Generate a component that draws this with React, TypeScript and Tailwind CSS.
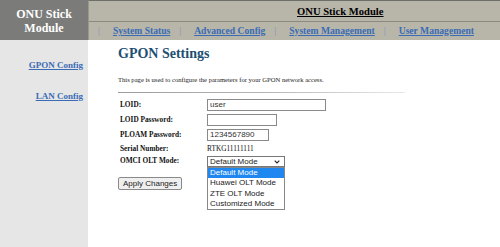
const serif = "font-['Liberation_Serif','Times_New_Roman',serif]";
const sans = "font-['Liberation_Sans',Arial,sans-serif]";

const navItems = ["System Status", "Advanced Config", "System Management", "User Management"];

const modes = ["Default Mode", "Huawei OLT Mode", "ZTE OLT Mode", "Customized Mode"];

export default function App() {
  return (
    <div className={`grid h-[247px] w-[500px] grid-cols-[88px_1fr] grid-rows-[40px_1fr] overflow-hidden bg-white ${serif}`}>
      {/* corner */}
      <div className="flex flex-col items-center justify-center bg-[#7b7b79] pt-[1px] text-[12px] font-bold leading-[14px] text-white">
        <span>ONU Stick</span>
        <span>Module</span>
      </div>

      {/* top bar */}
      <div className="flex flex-col border-t border-l border-t-[#6e6e68] border-l-[#9a978c] bg-[#b8b5a9]">
        <div className="flex h-[21px] items-center border-b border-[#8c8a80] pl-[208px] pt-[1px]">
          <span className="text-[10.6px] font-bold text-black underline">ONU Stick Module</span>
        </div>
        <div className="flex flex-1 items-center text-[9.6px] font-bold">
          {navItems.map(item => (
            <div key={item} className="flex items-center">
              <span className="ml-[9px] mr-[13px] font-normal text-[#7f93c0]">|</span>
              <a className="text-[#3a6cb5] underline">{item}</a>
            </div>
          ))}
        </div>
      </div>

      {/* sidebar */}
      <div className="flex flex-col items-end gap-[17px] bg-[#e6e6e6] pt-[19px] pr-[5px] text-[9px] font-bold">
        <a className="text-[#3a6cb5] underline">GPON Config</a>
        <a className="text-[#3a6cb5] underline">LAN Config</a>
      </div>

      {/* content */}
      <div className="pl-[30px] pt-[5px]">
        <h1 className="text-[14px] font-bold leading-[18px] text-[#1d4f72]">GPON Settings</h1>
        <p className="mt-[13px] text-[6.6px] leading-[8px] text-[#222]">
          This page is used to configure the parameters for your GPON network access.
        </p>
        <div className="mt-[8px] h-px w-[287px] bg-gradient-to-r from-[#9c9c9c] via-[#b4b4b4] to-[#e8e8e8]" />

        <div className="mt-[6px] grid grid-cols-[89px_1fr] items-center gap-y-[3px] text-[7.3px] text-[#111]">
          <span className="pl-[2px] font-bold">LOID:</span>
          <input
            readOnly
            value="user"
            className={`h-[12px] w-[119px] border border-[#8a8a8a] px-[2px] text-[8px] text-[#333] outline-none ${sans}`}
          />
          <span className="pl-[2px] font-bold">LOID Password:</span>
          <input
            readOnly
            value=""
            className={`h-[12px] w-[70px] border border-[#8a8a8a] px-[2px] text-[8px] outline-none ${sans}`}
          />
          <span className="pl-[2px] font-bold">PLOAM Password:</span>
          <input
            readOnly
            value="1234567890"
            className={`h-[12px] w-[62px] border border-[#8a8a8a] px-[2px] text-[8px] text-[#333] outline-none ${sans}`}
          />
          <span className="h-[9px] pl-[2px] font-bold leading-[9px]">Serial Number:</span>
          <span className="h-[9px] leading-[9px]">RTKG11111111</span>
          <span className="pl-[2px] font-bold">OMCI OLT Mode:</span>
          <div className="relative">
            <div className={`flex h-[11px] w-[78px] items-center justify-between border border-[#777] px-[2px] text-[8px] text-[#222] ${sans}`}>
              <span>Default Mode</span>
              <svg width="6" height="4" viewBox="0 0 6 4" className="mr-[2px]">
                <path d="M0.7 0.7 L3 3 L5.3 0.7" fill="none" stroke="#222" strokeWidth="1.1" />
              </svg>
            </div>
            <div className={`absolute left-0 top-[11px] w-[78px] border border-[#888] bg-white text-[8px] leading-[10.3px] text-[#222] ${sans}`}>
              {modes.map((m, i) => (
                <div key={m} className={i === 0 ? "bg-[#1e88f0] px-[2px] text-white" : "px-[2px]"}>
                  {m}
                </div>
              ))}
            </div>
          </div>
        </div>

        <button
          className={`mt-[10px] h-[13px] rounded-[2px] border border-[#8a8a8a] bg-[#efefef] px-[4px] text-[8px] leading-[11px] text-[#222] ${sans}`}
        >
          Apply Changes
        </button>
      </div>
    </div>
  );
}
